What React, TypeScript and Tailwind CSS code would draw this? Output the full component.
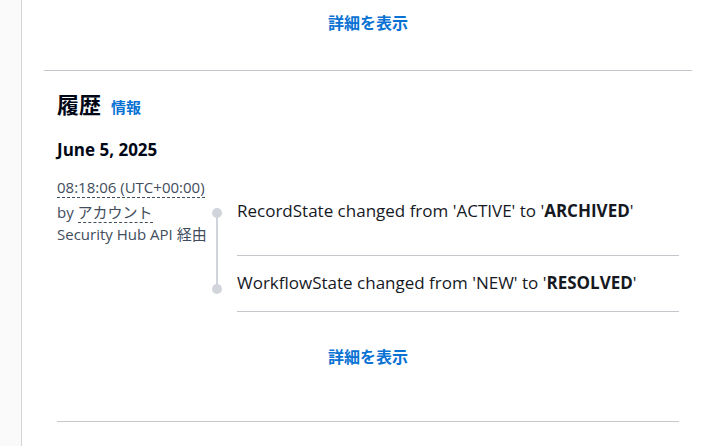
const sans = "font-['Open_Sans','Noto_Sans_CJK_JP',sans-serif]";

function ShowMore() {
  return (
    <div className="flex justify-center">
      <button type="button" className="text-[16px] font-bold leading-[22px] text-[#0972d3]">
        詳細を表示
      </button>
    </div>
  );
}

const changes = [
  { field: 'RecordState', from: 'ACTIVE', to: 'ARCHIVED' },
  { field: 'WorkflowState', from: 'NEW', to: 'RESOLVED' },
];

export default function App() {
  return (
    <div className={`flex min-h-[446px] bg-white text-[#16191f] ${sans}`}>
      <div className="w-[22px] shrink-0 border-r border-[#d5d5d5] bg-[#fafafa]" />
      <div className="ml-[22px] mr-[12px] flex-1">
        <div className="px-[13px] pt-[12px] pb-[36px]">
          <ShowMore />
        </div>

        <section className="border-t border-[#c6c6cd] px-[13px] pt-[18px]">
          <div className="flex items-baseline gap-[10px]">
            <h2 className="text-[22px] font-bold leading-[30px] text-[#000716]">履歴</h2>
            <a className="text-[15px] font-bold text-[#0972d3]">情報</a>
          </div>

          <p className="mt-[19px] text-[17px] font-bold leading-6 text-[#000716]">June 5, 2025</p>

          <div className="mt-[15px] flex">
            <div className="w-[150px] shrink-0 whitespace-nowrap text-[15px] text-[#414d5c]">
              <div className="leading-5">
                <span className="border-b border-dashed border-[#414d5c]">08:18:06 (UTC+00:00)</span>
              </div>
              <div className="mt-[4px] leading-[22px]">
                by <span className="border-b border-dashed border-[#414d5c]">アカウント</span>
              </div>
              <div className="leading-[22px]">Security Hub API 経由</div>
            </div>

            <div className="flex w-[20px] shrink-0 flex-col items-center pt-[31px]">
              <div className="h-[10px] w-[10px] rounded-full bg-[#d1d5db]" />
              <div className="-my-[1px] h-[68px] w-[2px] bg-[#d1d5db]" />
              <div className="h-[10px] w-[10px] rounded-full bg-[#d1d5db]" />
            </div>

            <div className="ml-[10px] mt-[6px] flex-1">
              {changes.map((c, i) => (
                <div
                  key={c.field}
                  className={`border-b border-[#c6c6cd] text-[17px] leading-6 ${i === 0 ? 'pt-[16px] pb-[32px]' : 'pt-[15px] pb-[16px]'}`}
                >
                  {c.field} changed from '{c.from}' to '<b>{c.to}</b>'
                </div>
              ))}
            </div>
          </div>

          <div className="mt-[34px] pb-[53px]">
            <ShowMore />
          </div>
          <div className="border-t border-[#c6c6cd]" />
        </section>
      </div>
    </div>
  );
}
